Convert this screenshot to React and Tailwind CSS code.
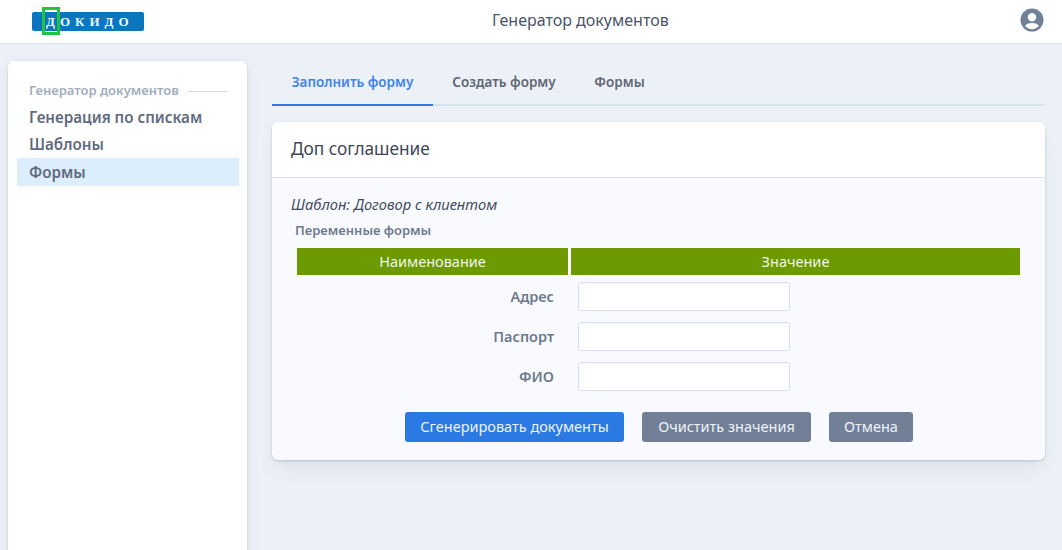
import React from "react";

function Logo() {
  return (
    <div className="relative ml-8 flex h-[19px] w-[112px] items-center rounded-[2px] bg-[#0a76bd] pl-[14px] font-['Liberation_Serif',serif] text-[13px] font-bold leading-none tracking-[5px] text-[#eef6fb]">
      <span>ДОКИДО</span>
      <div className="absolute left-[10px] top-[-5px] h-[28px] w-[18px] border-[3px] border-[#1fc53c]" />
    </div>
  );
}

function UserIcon() {
  return (
    <svg width="24" height="24" viewBox="0 0 24 24" className="-mt-[3px] text-[#718096]">
      <path
        fill="currentColor"
        d="M12 .5a11.5 11.5 0 1 0 0 23 11.5 11.5 0 0 0 0-23Zm0 4.6a4.2 4.2 0 1 1 0 8.4 4.2 4.2 0 0 1 0-8.4Zm0 16.1a9.2 9.2 0 0 1-6.9-3.1c.9-1.9 3.2-3.1 6.9-3.1s6 1.2 6.9 3.1a9.2 9.2 0 0 1-6.9 3.1Z"
      />
    </svg>
  );
}

function Field({ label }) {
  return (
    <div className="flex h-[30px] items-center">
      <div className="w-[263px] pt-[2px] text-right text-[14.5px] font-semibold text-[#6f7a8c]">{label}</div>
      <input className="ml-[24px] h-[29px] w-[212px] rounded-[3px] border border-[#d5e1ee] bg-white shadow-[inset_0_1px_2px_rgba(0,0,0,0.04)]" />
    </div>
  );
}

export default function App() {
  return (
    <div className="flex h-[550px] w-full flex-col overflow-hidden bg-[#ecf1f8] font-['Noto_Sans',sans-serif]">
      <header className="relative flex h-[44px] shrink-0 items-center justify-between border-b border-[#dfe3e9] bg-white pr-[18px]">
        <Logo />
        <div className="absolute left-[492px] top-[8px] text-[16px] leading-[24px] text-[#4a5568]">Генератор документов</div>
        <UserIcon />
      </header>

      <div className="flex min-h-0 flex-1 pl-2 pr-[17px] pt-[17px]">
        <aside className="h-[520px] w-[239px] shrink-0 rounded-[6px] bg-white pl-[9px] pr-[8px] pt-[20px] shadow-[0_1px_3px_rgba(45,55,72,0.16),0_4px_14px_rgba(45,55,72,0.08)]">
          <div className="flex h-[20px] items-center pl-3 pr-[12px]">
            <span className="text-[13px] font-semibold text-[#a0aec0]">Генератор документов</span>
            <span className="ml-2 h-px flex-1 bg-[#d5deea]" />
          </div>
          <div className="mt-[2px] flex h-[28px] items-center pl-3 text-[15.2px] font-semibold text-[#5f6b7e]">Генерация по спискам</div>
          <div className="flex h-[26px] items-center pl-3 text-[15.2px] font-semibold text-[#5f6b7e]">Шаблоны</div>
          <div className="mt-[1px] flex h-[28px] items-center bg-[#dcedfb] pl-3 text-[15.2px] font-semibold text-[#5f6b7e]">Формы</div>
        </aside>

        <main className="ml-[25px] min-w-0 flex-1">
          <nav className="flex h-[45px] border-b-2 border-[#d8e2ee] text-[13.5px] font-semibold">
            <div className="-mb-[2px] flex h-[45px] w-[161px] items-center justify-center border-b-2 border-[#2b7ae4] text-[#3f83e8]">Заполнить форму</div>
            <div className="flex w-[142px] items-center justify-center text-[#5f6773]">Создать форму</div>
            <div className="flex w-[89px] items-center justify-center text-[#5f6773]">Формы</div>
          </nav>

          <section className="mt-[16px] h-[338px] overflow-hidden rounded-[6px] bg-[#f8faff] shadow-[0_1px_3px_rgba(45,55,72,0.2),0_12px_20px_-4px_rgba(45,55,72,0.08)]">
            <div className="flex h-[56px] items-center border-b border-[#dfe3e9] bg-white pb-[2px] pl-[19px] text-[17.25px] text-[#3d4756]">Доп соглашение</div>
            <div className="px-[19px] pt-[15px]">
              <div className="text-[14.7px] italic leading-[22px] text-[#434d5c]">Шаблон: Договор с клиентом</div>
              <div className="mt-[6px] pl-[4px] text-[13px] font-semibold leading-[18px] text-[#6f7a8c]">Переменные формы</div>
              <div className="ml-[6px] mt-[9px] flex h-[27px] w-[723px] gap-[3px] text-[14.5px] text-[#f0f7e4]">
                <div className="flex w-[271px] items-center justify-center bg-[#6c9a00]">Наименование</div>
                <div className="flex flex-1 items-center justify-center bg-[#6c9a00]">Значение</div>
              </div>
              <div className="mt-[6px] flex flex-col gap-[10px]">
                <Field label="Адрес" />
                <Field label="Паспорт" />
                <Field label="ФИО" />
              </div>
              <div className="ml-[114px] mt-[21px] flex gap-[18px] text-[14.5px] text-[#eef3fa]">
                <button className="h-[30px] w-[219px] rounded-[3px] bg-[#2b7ae4]">Сгенерировать документы</button>
                <button className="h-[30px] w-[169px] rounded-[3px] bg-[#718096]">Очистить значения</button>
                <button className="h-[30px] w-[84px] rounded-[3px] bg-[#718096]">Отмена</button>
              </div>
            </div>
          </section>
        </main>
      </div>
    </div>
  );
}
